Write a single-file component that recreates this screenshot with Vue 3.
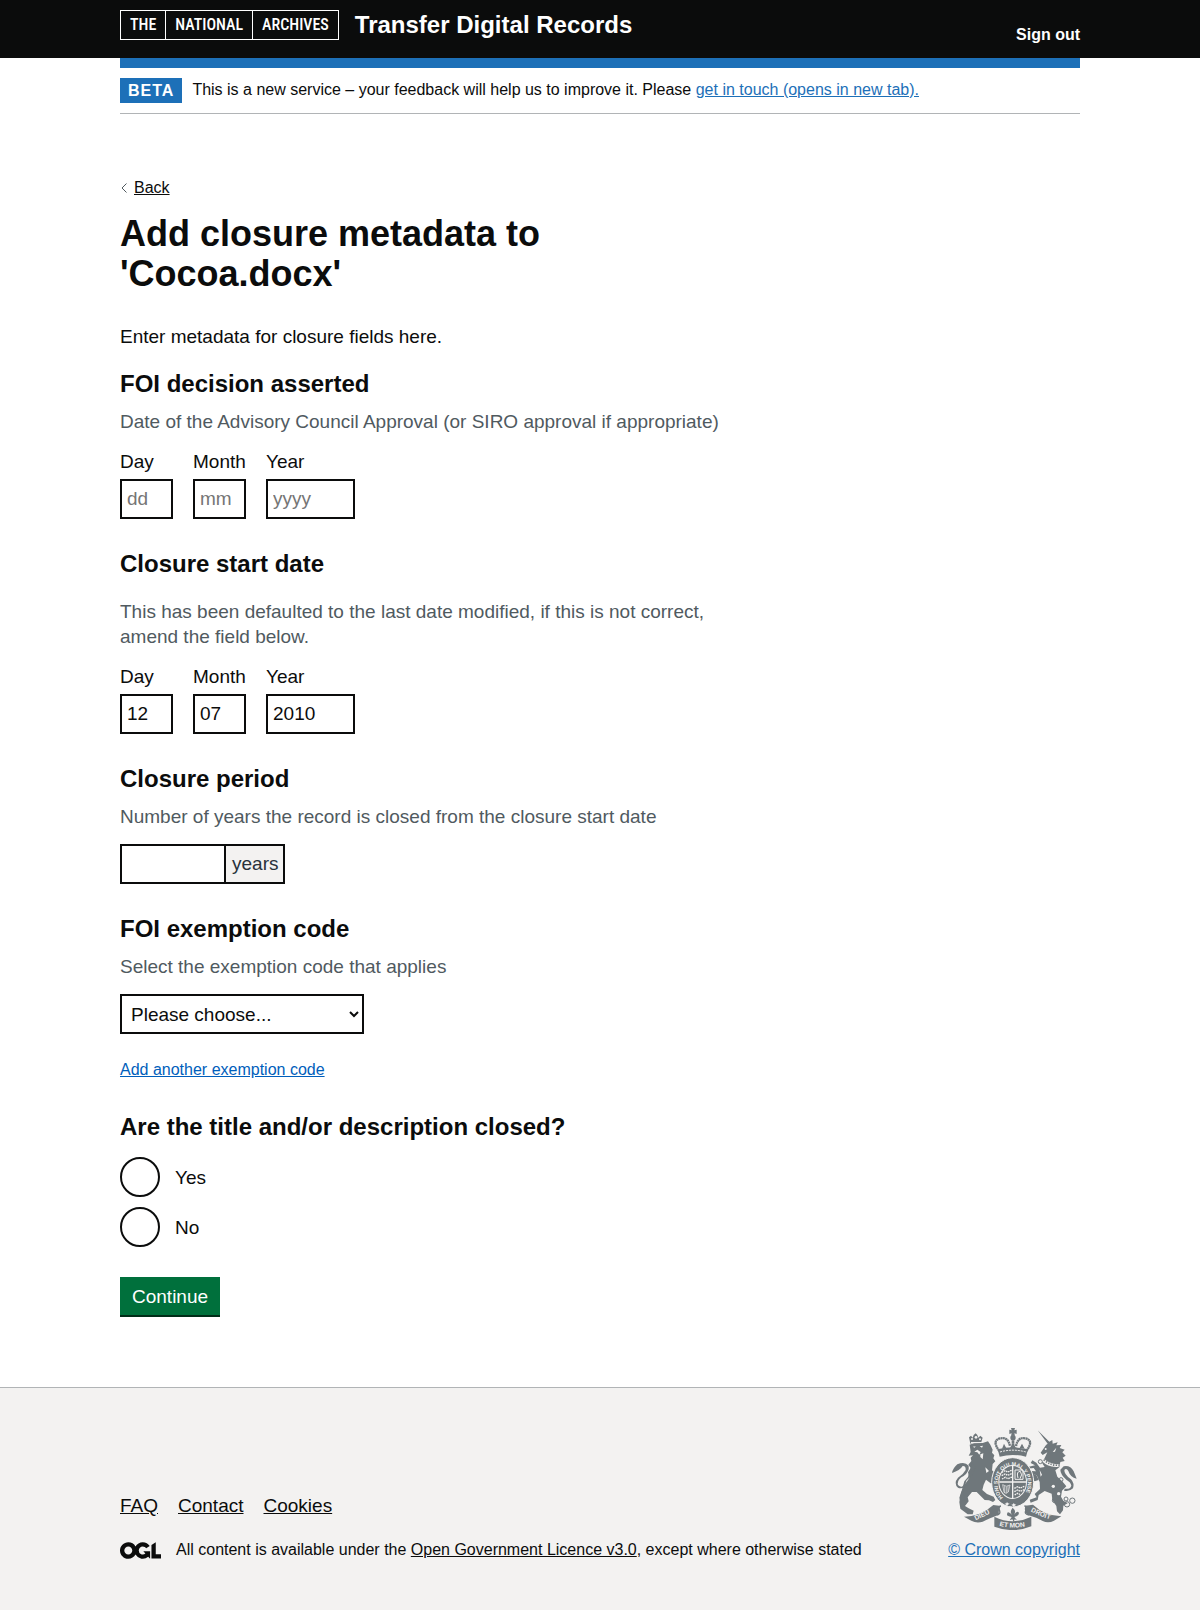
<script setup>
import { ref } from 'vue'

const foiDate = ref([
  { id: 'foi-day', label: 'Day', placeholder: 'dd', value: '', wide: false },
  { id: 'foi-month', label: 'Month', placeholder: 'mm', value: '', wide: false },
  { id: 'foi-year', label: 'Year', placeholder: 'yyyy', value: '', wide: true },
])
const startDate = ref([
  { id: 'start-day', label: 'Day', placeholder: 'dd', value: '12', wide: false },
  { id: 'start-month', label: 'Month', placeholder: 'mm', value: '07', wide: false },
  { id: 'start-year', label: 'Year', placeholder: 'yyyy', value: '2010', wide: true },
])
const years = ref('')
const exemption = ref('')
const closed = ref('')
const footerLinks = ['FAQ', 'Contact', 'Cookies']
</script>

<template>
  <div class="page">
    <header class="header">
      <div class="container header-row">
        <a href="#" class="logo" aria-label="The National Archives">
          <span>THE</span><span>NATIONAL</span><span>ARCHIVES</span>
        </a>
        <a href="#" class="service">Transfer Digital Records</a>
        <a href="#" class="sign-out">Sign out</a>
      </div>
    </header>

    <div class="container">
      <div class="phase">
        <strong class="tag">BETA</strong>
        <span>This is a new service – your feedback will help us to improve it. Please
          <a href="#" class="brand-link">get in touch (opens in new tab).</a></span>
      </div>

      <main class="main">
        <a href="#" class="back">
          <svg width="8" height="12" viewBox="0 0 8 12" aria-hidden="true">
            <path d="M6.5 1.500 2 6l4.500 4.500" fill="none" stroke="#505a5f" />
          </svg>
          <span>Back</span>
        </a>
        <h1>Add closure metadata to 'Cocoa.docx'</h1>
        <p class="intro">Enter metadata for closure fields here.</p>

        <form @submit.prevent>
          <fieldset class="group">
            <legend>FOI decision asserted</legend>
            <p class="hint">Date of the Advisory Council Approval (or SIRO approval if appropriate)</p>
            <div class="date">
              <div v-for="f in foiDate" :key="f.id" class="date-item">
                <label :for="f.id">{{ f.label }}</label>
                <input :id="f.id" v-model="f.value" type="text" inputmode="numeric" :placeholder="f.placeholder" class="input" :class="f.wide ? 'w4' : 'w2'">
              </div>
            </div>
          </fieldset>

          <fieldset class="group">
            <legend class="spaced">Closure start date</legend>
            <p class="hint">This has been defaulted to the last date modified, if this is not correct, amend the field below.</p>
            <div class="date">
              <div v-for="f in startDate" :key="f.id" class="date-item">
                <label :for="f.id">{{ f.label }}</label>
                <input :id="f.id" v-model="f.value" type="text" inputmode="numeric" :placeholder="f.placeholder" class="input" :class="f.wide ? 'w4' : 'w2'">
              </div>
            </div>
          </fieldset>

          <div class="group">
            <h2><label for="period">Closure period</label></h2>
            <p class="hint">Number of years the record is closed from the closure start date</p>
            <div class="suffixed">
              <input id="period" v-model="years" type="text" inputmode="numeric" class="input w5">
              <span class="suffix">years</span>
            </div>
          </div>

          <div class="group code-group">
            <h2><label for="exemption">FOI exemption code</label></h2>
            <p class="hint">Select the exemption code that applies</p>
            <select id="exemption" v-model="exemption" class="select">
              <option value="">Please choose...</option>
              <option value="23">23</option>
              <option value="24">24</option>
              <option value="40">40</option>
            </select>
          </div>
          <button type="button" class="add">Add another exemption code</button>

          <fieldset class="group">
            <legend class="radio-legend">Are the title and/or description closed?</legend>
            <div class="radios">
              <label v-for="o in ['Yes', 'No']" :key="o" class="radio">
                <input v-model="closed" type="radio" name="closed" :value="o">
                <span>{{ o }}</span>
              </label>
            </div>
          </fieldset>

          <button type="submit" class="continue">Continue</button>
        </form>
      </main>
    </div>

    <footer class="footer">
      <div class="container footer-row">
        <div>
          <nav class="links">
            <a v-for="l in footerLinks" :key="l" href="#" class="dark-link">{{ l }}</a>
          </nav>
          <div class="licence">
            <svg width="41" height="17" viewBox="0 0 483.200 195.700" aria-hidden="true">
              <path fill="currentColor" d="M421.500 142.800V.1l-50.700 32.300v161.100h112.400v-50.700zm-122.300-9.600A47.120 47.120 0 0 1 221 97.800c0-26 21.100-47.100 47.100-47.100 16.700 0 31.400 8.700 39.700 21.800l42.700-27.200A97.630 97.630 0 0 0 268.100 0c-36.500 0-68.300 20.100-85.100 49.700A98 98 0 0 0 97.800 0C43.900 0 0 43.900 0 97.800s43.900 97.800 97.800 97.800c36.500 0 68.300-20.100 85.100-49.700a97.760 97.760 0 0 0 149.600 25.400l19.400 22.200h3v-87.800h-80l24.300 27.500zM97.800 145c-26 0-47.100-21.100-47.100-47.100s21.100-47.100 47.100-47.100 47.100 21.100 47.100 47.100S123.800 145 97.800 145" />
            </svg>
            <span>All content is available under the <a href="#" class="dark-link">Open Government Licence v3.0</a>, except where otherwise stated</span>
          </div>
        </div>

        <a href="#" class="copyright brand-link">
          <svg class="crest" width="125" height="102" viewBox="66 54 375 306" aria-hidden="true">
            <defs>
              <path id="garter" d="M219 263A45 54 0 1 1 277 263" />
              <path id="scroll-left" d="M137 331 194 304" />
              <path id="scroll-mid" d="M208 347Q248 358 296 347" />
              <path id="scroll-right" d="M302 304Q332 321 372 331" />
            </defs>

            <!-- lion -->
            <g fill="#6f777b">
              <path d="M121 101 117 82l6-5 5 6 3-8 6-5 5 5 3 8 6-6 7 6-5 16-16-3z" />
              <path d="M119 104 134 98 158 99 174 94 181 104 188 119 186 128 193 136 190 145 196 154 188 162 186 181 201 194 190 204 192 218 182 220 168 209 161 224 157 240 171 252 191 260 196 270 189 276 177 271 164 270 149 255 140 246 126 246 113 262 116 274 105 288 116 295 131 302 128 313 113 313 91 296 88 276 93 249 103 226 118 204 114 187 122 174 115 164 124 153 122 143 129 136 116 137 122 126Z" />
              <path d="M126 160 137 171 128 195 110 211 100 239 104 269 91 276 88 263 96 239 103 214 114 201Z" />
              <path d="M82 163Q104 153 116 167Q119 184 101 198Q83 207 83 221Q84 229 96 230L112 216 115 222Q99 239 84 233Q70 220 84 203Q100 193 107 180Q108 167 98 168Q90 181 66 189Q69 174 82 163Z" />
            </g>
            <g fill="#f3f2f1">
              <circle cx="126" cy="87" r="3" /><circle cx="138" cy="82" r="4" /><circle cx="150" cy="88" r="3" />
              <path d="M123 96 156 96 155 99 123 100ZM128 110 137 109 134 113ZM149 109 159 107 156 113ZM133 125 142 119 152 126 148 134 142 127Z" />
              <path d="M151 133 160 130 158 148 151 141ZM166 172 177 183 169 189Z" />
            </g>

            <!-- unicorn -->
            <g fill="#6f777b">
              <path d="M323 61 358 95 367 90 368 101 383 97 379 106 394 105 389 114 404 119 397 127 407 137 398 143 404 153 391 156 388 172 376 181 382 200 396 213 409 229 396 242 393 260 400 272 413 280 400 287 399 301 390 313 381 304 379 288 367 270 365 251 344 243 326 255 323 270 302 278 299 269 320 262 314 252 330 237 329 216 320 196 297 189 300 183 318 184 311 174 292 176 294 171 315 166 302 159 307 151 319 158 330 173 344 171 336 158 344 144 352 127 338 135 332 128 348 105 353 101Z" />
              <path d="M401 169Q421 165 431 184Q437 199 440 206Q421 202 415 183Q409 173 403 180Q402 193 423 208Q434 220 429 235Q418 246 402 242L404 236Q420 239 424 227Q423 217 409 209Q391 193 391 179Z" />
              <path d="M303 190 319 195 326 210 314 214 304 205Z" />
            </g>
            <g fill="#f3f2f1">
              <circle cx="347" cy="117" r="3" /><circle cx="370" cy="229" r="5" /><circle cx="386" cy="251" r="5" />
              <path d="M340 145Q361 165 388 162L386 170Q357 174 335 153ZM329 180 336 194 332 200ZM379 113 368 126 375 125Z" />
            </g>
            <g fill="none" stroke="#6f777b">
              <path d="M341 149Q364 169 387 165" stroke-width="5" stroke-dasharray="4 4" />
              <g stroke-width="3">
                <circle cx="331" cy="155" r="6" /><circle cx="393" cy="209" r="6" /><circle cx="374" cy="271" r="7" />
                <circle cx="391" cy="285" r="6" /><circle cx="408" cy="267" r="6" /><circle cx="411" cy="283" r="8" /><circle cx="427" cy="272" r="8" />
              </g>
            </g>

            <!-- crown -->
            <g fill="none" stroke="#6f777b">
              <path d="M208 123Q184 91 211 85Q234 80 240 108M289 123Q313 91 286 85Q264 80 258 108" stroke-width="7" stroke-dasharray="6 1" />
              <path d="M249 79V120" stroke-width="8" stroke-dasharray="6 1" />
            </g>
            <g fill="#6f777b">
              <path d="M243 54H255L253 61 260 59V72L253 70 255 77H243L245 70 238 72V59L245 61Z" />
              <circle cx="249" cy="83" r="8" />
              <path d="M203 118Q248 106 294 118L288 140Q248 130 209 140Z" />
              <path d="M216 116 222 101 229 115ZM240 114 249 98 258 114ZM269 114 276 101 284 116Z" />
            </g>
            <path d="M210 126Q248 115 288 126" fill="none" stroke="#f3f2f1" stroke-width="3" stroke-dasharray="6 3" />

            <!-- shield inside the garter -->
            <ellipse cx="248" cy="217" rx="63" ry="74" fill="#6f777b" stroke="#f3f2f1" stroke-width="3" />
            <text class="garter-text"><textPath href="#garter">HONI SOIT QUI MAL Y PENSE</textPath></text>
            <ellipse cx="248" cy="216" rx="43" ry="51" fill="#f3f2f1" />
            <ellipse cx="248" cy="216" rx="40" ry="48" fill="#6f777b" />
            <g fill="none" stroke="#f3f2f1">
              <path d="M248 168V264M208 216H288" stroke-width="4" />
              <path d="M215 187l10-5 8 4 12-5M215 197l10-5 8 4 12-5M216 207l10-5 8 4 12-5M253 235l10-5 8 4 12-5M253 245l10-5 8 4 12-5M254 255l8-5 8 3" stroke-width="4" stroke-dasharray="5 2" />
              <path d="M255 180H279V208H255ZM264 204Q258 184 271 184Q279 194 270 206" stroke-width="3" />
              <path d="M218 224Q229 233 240 225L235 246Q229 254 222 247ZM224 228V248M229 230V249M234 228V246" stroke-width="2" />
            </g>
            <path d="M231 276l3 4 5 1-5 3-3 4-3-4-4-3 5-1ZM251 279l3 4 5 1-5 3-3 4-3-4-4-3 5-1Z" fill="#f3f2f1" />

            <!-- motto scroll -->
            <path d="M213 288Q204 289 208 299Q213 313 202 315M283 288Q295 289 288 301Q281 312 298 315" fill="none" stroke="#6f777b" stroke-width="4" />
            <g fill="#6f777b">
              <path d="M102 320Q153 319 190 285L213 288Q204 299 207 314Q174 326 158 335 140 341 124 332Z" />
              <path d="M286 287 309 284Q343 317 394 319L372 332Q355 341 338 333 316 321 294 315 281 305 286 287Z" />
              <path d="M193 320Q248 347 304 320V349Q250 371 193 350Z" />
              <path d="M248 293Q237 307 247 315Q230 298 231 316Q235 320 245 321L239 331 247 328 251 336 254 328 261 331 253 321Q267 318 267 309Q262 300 252 314Q260 303 248 293Z" />
            </g>
            <text class="motto"><textPath href="#scroll-left">DIEU</textPath></text>
            <text class="motto"><textPath href="#scroll-mid">ET MON</textPath></text>
            <text class="motto"><textPath href="#scroll-right">DROIT</textPath></text>
          </svg>
          <span>© Crown copyright</span>
        </a>
      </div>
    </footer>
  </div>
</template>

<style>
body {
  margin: 0;
  background: #f3f2f1;
}
</style>

<style scoped>
.page {
  background: #fff;
  color: #0b0c0c;
  font-family: "Liberation Sans", Arial, sans-serif;
  font-size: 19px;
  line-height: 25px;
}
.container {
  max-width: 960px;
  margin: 0 auto;
}
.header {
  background: #0b0c0c;
}
.header-row {
  display: flex;
  align-items: flex-start;
  height: 58px;
  color: #fff;
}
.header a {
  color: #fff;
  text-decoration: none;
}
.logo {
  display: flex;
  box-sizing: border-box;
  height: 30px;
  margin: 10px 16px 0 0;
  border: 1px solid #fff;
  font: 500 16px/28px "Liberation Sans Narrow", "Roboto Condensed", Roboto, sans-serif;
}
.logo span {
  padding: 0 9px;
}
.logo span + span {
  border-left: 1px solid #fff;
}
.service {
  padding-top: 10px;
  font-size: 24px;
  font-weight: 700;
  line-height: 30px;
}
.sign-out {
  margin-left: auto;
  padding-top: 25px;
  font-size: 16px;
  font-weight: 700;
  line-height: 20px;
}
.phase {
  display: flex;
  align-items: flex-start;
  padding: 10px 0;
  border-top: 10px solid #1d70b8;
  border-bottom: 1px solid #b1b4b6;
  font-size: 16px;
  line-height: 24px;
}
.tag {
  margin-right: 10px;
  padding: 0 8px;
  background: #1d70b8;
  color: #fff;
  line-height: 25px;
  letter-spacing: 1px;
}
.brand-link {
  color: #1d70b8;
}
.dark-link {
  color: #0b0c0c;
}
.main {
  max-width: 630px;
  padding: 64px 0 70px;
}
.back {
  display: flex;
  align-items: center;
  gap: 6px;
  width: fit-content;
  color: #0b0c0c;
  font-size: 16px;
  line-height: 20px;
  text-decoration: none;
}
.back span {
  text-decoration: underline;
}
h1 {
  margin: 16px 0 30px;
  font-size: 36px;
  line-height: 40px;
}
p {
  margin: 0;
}
.intro {
  margin-bottom: 20px;
}
fieldset {
  min-width: 0;
  margin: 0;
  padding: 0;
  border: 0;
}
.group {
  margin-bottom: 30px;
}
legend,
h2 {
  margin: 0 0 10px;
  padding: 0;
  font-size: 24px;
  font-weight: 700;
  line-height: 30px;
}
.spaced {
  margin-bottom: 20px;
}
.hint {
  margin-bottom: 15px;
  color: #505a5f;
}
.date {
  display: flex;
  gap: 20px;
}
.date-item label {
  display: block;
  margin-bottom: 5px;
}
.input,
.select {
  display: block;
  box-sizing: border-box;
  height: 40px;
  margin: 0;
  padding: 5px;
  border: 2px solid #0b0c0c;
  border-radius: 0;
  background: #fff;
  color: #0b0c0c;
  font: inherit;
}
.input::placeholder {
  color: #757575;
}
.w2 {
  width: 53px;
}
.w4 {
  width: 89px;
}
.w5 {
  width: 106px;
}
.suffixed {
  display: flex;
}
.suffix {
  box-sizing: border-box;
  height: 40px;
  padding: 5px 5px 5px 6px;
  border: 2px solid #0b0c0c;
  border-left: 0;
  background: #f3f2f1;
  color: #28313b;
  line-height: 26px;
}
.select {
  width: 244px;
}
.code-group {
  margin-bottom: 26px;
}
.add {
  display: block;
  margin: 0 0 32px;
  padding: 0;
  border: 0;
  background: none;
  color: #005ebb;
  font: inherit;
  font-size: 16px;
  line-height: 20px;
  text-decoration: underline;
}
.radio-legend {
  margin-bottom: 15px;
}
.radios {
  display: flex;
  flex-direction: column;
  align-items: flex-start;
  gap: 10px;
}
.radio {
  display: flex;
  align-items: center;
  gap: 15px;
}
.radio input {
  appearance: none;
  width: 40px;
  height: 40px;
  margin: 0;
  border: 2px solid #0b0c0c;
  border-radius: 50%;
}
.radio input:checked {
  background: radial-gradient(#0b0c0c 10px, transparent 11px);
}
.continue {
  display: block;
  height: 38px;
  margin: 0 0 2px;
  padding: 0 12px;
  border: 0;
  background: #00703c;
  box-shadow: 0 2px 0 #002d18;
  color: #fff;
  font: inherit;
}
.footer {
  padding: 40px 0 49px;
  border-top: 1px solid #b1b4b6;
  background: #f3f2f1;
}
.footer-row {
  display: flex;
  align-items: flex-end;
  justify-content: space-between;
}
.links {
  display: flex;
  gap: 20px;
  margin-bottom: 21px;
}
.licence {
  display: flex;
  align-items: center;
  gap: 15px;
  font-size: 16px;
  line-height: 22px;
}
.copyright {
  display: flex;
  flex-direction: column;
  align-items: center;
  gap: 9px;
  font-size: 16px;
  line-height: 22px;
}
.crest {
  display: block;
}
.garter-text,
.motto {
  fill: #f3f2f1;
  font-family: "Liberation Sans", Arial, sans-serif;
  font-weight: 700;
}
.garter-text {
  font-size: 16px;
}
.motto {
  font-size: 20px;
}
</style>
